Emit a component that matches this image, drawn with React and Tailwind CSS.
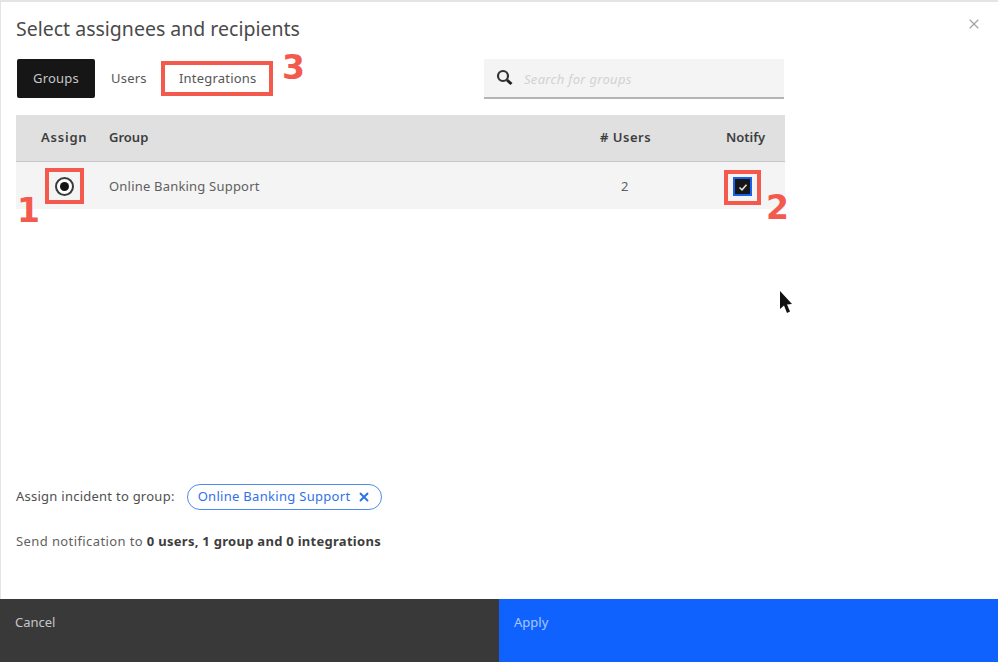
import { X } from "lucide-react"

const font = "font-['Noto_Sans','Liberation_Sans',sans-serif]"
const callout = "absolute font-['DejaVu_Sans',sans-serif] font-bold text-[33px] leading-none tracking-[-1px] text-[#f4594e]"
const redBox = "absolute border-4 border-[#f4594e]"

const App = () => {
  return (
    <div className={`relative w-[998px] h-[662px] flex flex-col bg-white overflow-hidden ${font}`}>
      <div className="flex-1 flex flex-col border-l border-t-2 border-[#e4e4e4] pl-[15px] min-h-0">
        <div className="flex items-start justify-between h-[57px] pt-[13px] pr-[16px]">
          <h1 className="text-[19.5px] leading-[27px] text-[#4a4a4a]">Select assignees and recipients</h1>
          <X className="w-[16px] h-[16px] mt-[1px] text-[#a0a0a0]" strokeWidth={1.6} />
        </div>

        <div className="flex items-start justify-between w-[768px] h-[56px]">
          <div className="flex items-center text-[13px] text-[#565656]">
            <button className="w-[78px] h-[39px] ml-[1px] rounded-[2px] bg-[#161616] text-[#c6c6c6] tracking-[0.2px]">Groups</button>
            <span className="ml-[16px] w-[51px] tracking-[0.2px]">Users</span>
            <span className="ml-[17px] tracking-[0.2px]">Integrations</span>
          </div>
          <div className="flex items-center w-[300px] h-[40px] bg-[#f4f4f4] border-b-2 border-[#b4b4b4] pl-[12px]">
            <svg viewBox="0 0 18 18" className="w-[18px] h-[18px]" fill="none">
              <circle cx="7" cy="7" r="5" stroke="#333" strokeWidth="2.2" />
              <path d="M11 11 L15.5 15" stroke="#222" strokeWidth="3" />
            </svg>
            <span className="ml-[10px] pt-[3px] text-[13px] tracking-[0.3px] italic text-[#d2d2d2]">Search for groups</span>
          </div>
        </div>

        <div className="w-[769px]">
          <div className="flex items-center h-[47px] bg-[#e0e0e0] border-b border-[#c6c6c6] text-[13px] font-semibold text-[#3d3d3d]">
            <span className="w-[93px] pl-[25px] tracking-[0.8px]">Assign</span>
            <span className="flex-1">Group</span>
            <span className="w-[126px] tracking-[0.5px]"># Users</span>
            <span className="w-[59px]">Notify</span>
          </div>
          <div className="flex items-center h-[47px] pt-[2px] bg-[#f4f4f4] text-[13px] text-[#5f5f5f]">
            <span className="w-[93px] pl-[39px]">
              <span className="flex items-center justify-center w-[19px] h-[19px] rounded-full border-2 border-[#3a3a3a] bg-white">
                <span className="w-[9px] h-[9px] rounded-full bg-[#161616]" />
              </span>
            </span>
            <span className="flex-1 tracking-[0.2px]">Online Banking Support</span>
            <span className="w-[113px]">2</span>
            <span className="w-[51px]">
              <span className="flex items-center justify-center w-[17px] h-[17px] bg-[#161616] border border-[#1f5fd8] outline outline-1 outline-[#0f62fe]">
                <svg viewBox="0 0 12 12" className="w-[12px] h-[12px]" fill="none" stroke="#e0e0e0" strokeWidth="1.6">
                  <path d="M2.5 6.5 L5 8.8 L9.5 3.8" />
                </svg>
              </span>
            </span>
          </div>
        </div>

        <div className="flex-1" />

        <div className="flex items-center h-[26px] text-[13px] text-[#4f4f4f] tracking-[0.25px]">
          <span>Assign incident to group:</span>
          <span className="flex items-center h-[26px] ml-[12px] pl-[10px] pr-[10px] rounded-full border-[1.5px] border-[#4d8af0] text-[#2f72e8] tracking-[0.3px]">
            Online Banking Support
            <X className="w-[14px] h-[14px] ml-[7px]" strokeWidth={3.2} />
          </span>
        </div>
        <p className="mt-[22px] mb-[49px] text-[13px] leading-[18px] text-[#5f5f5f] tracking-[0.4px]">
          Send notification to <span className="font-bold text-[#3d3d3d] tracking-[0.28px]">0 users, 1 group and 0 integrations</span>
        </p>
      </div>

      <div className="flex h-[63px] text-[13px]">
        <div className="w-[499px] bg-[#393939] pl-[15px] pt-[14px] text-[#c6c6c6]">Cancel</div>
        <div className="flex-1 bg-[#0f62fe] pl-[15px] pt-[14px] text-[#a9c8ff]">Apply</div>
      </div>

      {/* numbered annotations and highlight boxes on top of the screenshot */}
      <div className={`${redBox} left-[161px] top-[61px] w-[112px] h-[35px]`} />
      <div className={`${redBox} left-[45px] top-[168px] w-[39px] h-[36px]`} />
      <div className={`${redBox} left-[724px] top-[170px] w-[37px] h-[35px]`} />
      <span className={`${callout} left-[282px] top-[51px]`}>3</span>
      <span className={`${callout} left-[17px] top-[194px]`}>1</span>
      <span className={`${callout} left-[766px] top-[191px]`}>2</span>

      <svg viewBox="0 0 14 26" className="absolute left-[779px] top-[290px] w-[14px] h-[26px]">
        <path d="M1 1 L1 19 L5 15.5 L8 23 L11 21.5 L8 14.5 L13 14 Z" fill="#111" />
      </svg>
    </div>
  )
}

export default App
